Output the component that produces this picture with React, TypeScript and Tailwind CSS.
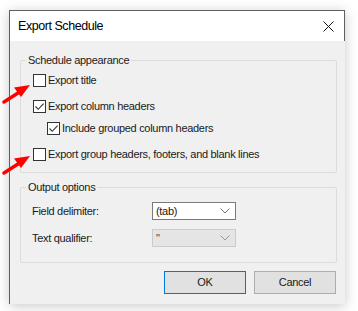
import React from "react";

const FONT = { fontFamily: '"Liberation Sans", "Noto Sans", sans-serif' };

function Check({ checked }: { checked?: boolean }) {
  return (
    <span className="flex h-[13px] w-[13px] shrink-0 items-center justify-center border border-[#333] bg-white">
      {checked && (
        <svg width="11" height="11" viewBox="0 0 11 11" fill="none">
          <path d="M1.5 5.5 L4.2 8.3 L9.6 2.6" stroke="#333" strokeWidth="1.1" />
        </svg>
      )}
    </span>
  );
}

function CheckRow({ label, checked, indent, className = "" }: { label: string; checked?: boolean; indent?: boolean; className?: string }) {
  return (
    <div className={`flex h-[13px] items-center gap-[2px] ${indent ? "pl-[26px]" : "pl-[12px]"} ${className}`}>
      <Check checked={checked} />
      <span className="whitespace-nowrap leading-none">{label}</span>
    </div>
  );
}

function Chevron({ color }: { color: string }) {
  return (
    <svg width="10" height="6" viewBox="0 0 10 6" fill="none">
      <path d="M0.5 0.5 L5 5 L9.5 0.5" stroke={color} strokeWidth="1" />
    </svg>
  );
}

function RedArrow() {
  return (
    <svg width="30" height="22" viewBox="0 0 30 22">
      <path d="M2 20 L16 11" stroke="#f00" strokeWidth="3.4" strokeLinecap="round" />
      <path d="M28 3 L12 5.5 L19 15 Z" fill="#f00" />
    </svg>
  );
}

export default function App() {
  return (
    <div className="relative h-[311px] w-[358px] overflow-hidden bg-white text-[11px] tracking-[-0.3px] text-[#1a1a1a]" style={FONT}>
      <div className="ml-[9px] mt-[10px] flex h-[294px] w-[336px] flex-col shadow-[0_2px_12px_rgba(0,0,0,0.22)]">
        <div className="flex h-[31px] items-center justify-between border-l border-r border-t border-[#5f5f5f] bg-white pl-[8px] pr-[10px]">
          <span className="text-[12.5px] tracking-[-0.45px] text-black">Export Schedule</span>
          <svg width="11" height="11" viewBox="0 0 11 11">
            <path d="M0.5 0.5 L10.5 10.5 M10.5 0.5 L0.5 10.5" stroke="#111" strokeWidth="1" />
          </svg>
        </div>
        <div className="flex flex-1 flex-col border-l border-[#5f5f5f] bg-[#f0f0f0] pl-[10px] pr-[8px] pt-[19px]">
          <fieldset className="relative flex h-[113px] w-[317px] flex-col rounded-[2px] border border-[#dcdcdc] pt-[13px]">
            <span className="absolute left-[5px] top-[-8px] bg-[#f0f0f0] px-[2px] leading-[14px]">Schedule appearance</span>
            <CheckRow label="Export title" />
            <CheckRow label="Export column headers" checked className="mt-[13px]" />
            <CheckRow label="Include grouped column headers" checked indent className="mt-[9px]" />
            <CheckRow label="Export group headers, footers, and blank lines" className="mt-[13px]" />
          </fieldset>
          <fieldset className="relative mt-[14px] flex h-[76px] w-[317px] flex-col gap-[9px] rounded-[2px] border border-[#dcdcdc] pl-[11px] pt-[14px]">
            <span className="absolute left-[5px] top-[-8px] bg-[#f0f0f0] px-[2px] leading-[14px]">Output options</span>
            <div className="flex items-center">
              <span className="w-[120px]">Field delimiter:</span>
              <div className="flex h-[18px] w-[84px] items-center justify-between border border-[#7a7a7a] bg-white pl-[3px] pr-[5px]">
                <span>(tab)</span>
                <Chevron color="#777" />
              </div>
            </div>
            <div className="flex items-center">
              <span className="w-[120px]">Text qualifier:</span>
              <div className="flex h-[18px] w-[84px] items-center justify-between border border-[#cccccc] bg-[#e5e5e5] pl-[3px] pr-[5px]">
                <span className="text-[#444]">"</span>
                <Chevron color="#999" />
              </div>
            </div>
          </fieldset>
          <div className="mt-[8px] flex justify-end gap-[8px] pr-[1px]">
            <button className="h-[23px] w-[82px] border border-[#0078d7] bg-[#e1e1e1]">OK</button>
            <button className="h-[23px] w-[82px] border border-[#adadad] bg-[#e1e1e1]">Cancel</button>
          </div>
        </div>
      </div>
      <div className="absolute left-[2px] top-[82px]">
        <RedArrow />
      </div>
      <div className="absolute left-[2px] top-[153px]">
        <RedArrow />
      </div>
    </div>
  );
}
